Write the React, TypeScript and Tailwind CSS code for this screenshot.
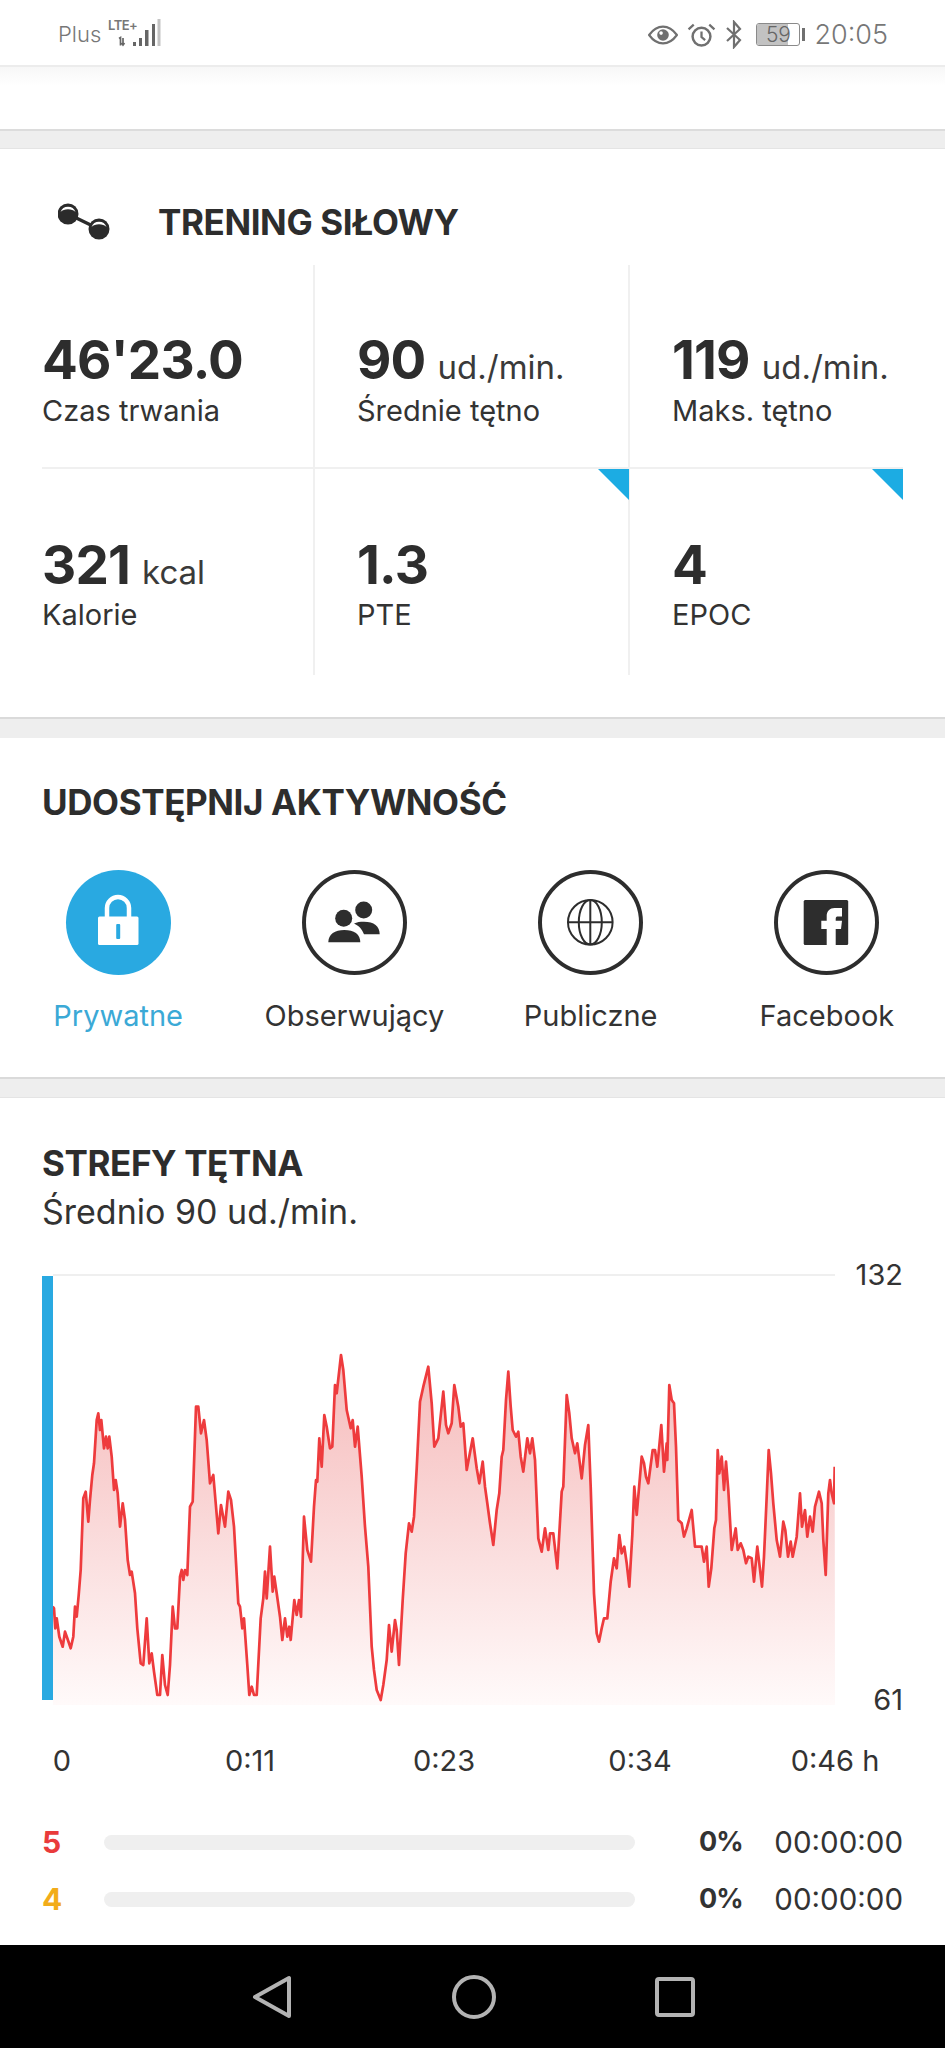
import React from "react";

// traced from the reference, crop coords (3x): left crop origin 30,1260 and right crop origin 470,1260
const leftTrace = [
  [68,1040],[72,1045],[76,1105],[80,1075],[88,1130],[98,1160],[105,1115],[112,1135],[122,1165],[130,1130],[135,1040],[140,1070],[146,1005],[152,930],[160,715],[167,695],[175,785],[180,720],[187,645],[192,610],[200,480],[205,460],[210,510],[214,480],[222,565],[228,530],[233,565],[238,530],[245,590],[252,690],[257,660],[263,700],[270,800],[278,730],[285,780],[293,900],[300,945],[305,935],[315,1000],[322,1105],[332,1210],[340,1215],[350,1075],[358,1210],[365,1180],[372,1235],[382,1305],[390,1305],[397,1185],[405,1275],[413,1305],[420,1215],[428,1040],[435,1105],[442,1105],[450,950],[455,930],[460,960],[465,930],[472,945],[480,740],[488,725],[498,440],[505,440],[513,520],[522,480],[530,540],[540,670],[550,645],[565,820],[573,735],[585,800],[595,695],[603,720],[612,800],[625,1030],[630,1040],[637,1105],[642,1075],[652,1215],[658,1305],[665,1280],[672,1305],[680,1305],[692,1075],[700,1015],[705,935],[710,1015],[720,860],[728,995],[733,950],[740,1000],[750,1070],[757,1140],[765,1075],[772,1130],[778,1100],[782,1140],[793,1020],[800,1065],[807,1020],[813,1070],[822,770],[832,870],[843,905],[852,740],[858,660],[862,665],[868,535],[875,620],[883,465],[890,500],[900,565],[907,560],[915,375],[920,400],[933,285],[940,330],[950,450],[962,505],[968,480],[975,560],[983,500],[995,650],[1005,800],[1015,920],[1025,1160],[1032,1230],[1040,1290],[1052,1320],[1060,1275],[1070,1200],[1077,1095],[1085,1175],[1095,1080],[1100,1110],[1107,1215],[1118,1020],[1127,880],[1137,790],[1145,815],[1152,770],[1160,625],[1170,425],[1180,380],[1195,320],[1205,430],[1213,560],[1225,535],[1240,395],[1248,495],[1255,520],[1265,490],[1273,375],[1285,440],[1292,500],[1300,490],[1310,630],
];
const rightTrace = [
  [8,535],[20,625],[28,670],[38,605],[45,680],[52,730],[60,790],[70,855],[80,750],[88,700],[95,590],[100,570],[108,420],[115,335],[122,440],[128,510],[138,530],[145,515],[152,590],[160,635],[172,535],[180,580],[187,535],[195,600],[205,835],[215,875],[225,805],[235,870],[240,820],[250,820],[262,925],[275,695],[280,680],[290,405],[298,460],[305,535],[315,580],[322,550],[335,655],[345,555],[355,495],[362,680],[372,1000],[380,1120],[387,1145],[395,1105],[402,1075],[412,1075],[422,965],[432,895],[440,925],[448,825],[455,880],[463,860],[470,910],[478,980],[487,825],[493,680],[500,765],[515,590],[522,610],[528,650],[535,670],[548,570],[555,570],[562,620],[574,495],[582,635],[590,550],[592,600],[598,375],[605,420],[612,430],[618,560],[625,780],[635,790],[642,830],[650,805],[665,750],[675,860],[695,860],[702,905],[710,860],[716,980],[724,925],[733,805],[738,780],[743,570],[748,640],[755,590],[762,690],[768,605],[775,690],[785,870],[797,805],[803,870],[812,850],[820,870],[828,910],[835,890],[845,895],[852,965],[862,860],[868,910],[876,980],[882,890],[890,710],[896,570],[903,640],[910,730],[920,840],[930,890],[940,785],[946,810],[954,890],[962,845],[968,890],[980,830],[990,700],[996,800],[1005,750],[1012,830],[1020,770],[1028,815],[1035,740],[1047,695],[1055,730],[1060,840],[1067,945],[1075,700],[1080,660],[1085,700],[1092,730],[1094,620],
];

const points = [
  ...leftTrace.map(([x, y]) => [30 + x / 3, 1260 + y / 3]),
  ...rightTrace.map(([x, y]) => [470 + x / 3, 1260 + y / 3]),
];
const line = points.map(([x, y]) => `${x.toFixed(1)},${y.toFixed(1)}`).join(" ");
const area = `53,1705 ${line} 835,1705`;

const Dumbbell = () => (
  <svg viewBox="13 12 52 38" className="w-[52px] h-[38px]">
    <path d="M23 23L54 38" stroke="#2b2b2b" strokeWidth="3.5" />
    <circle cx="23" cy="23" r="10.5" fill="#2b2b2b" />
    <circle cx="54" cy="38" r="10.5" fill="#2b2b2b" />
    <path d="M15.5 21A8 8 0 0 1 30.5 21A9 6 0 0 0 15.5 21Z" fill="#fff" />
    <path d="M46.5 36A8 8 0 0 1 61.5 36A9 6 0 0 0 46.5 36Z" fill="#fff" />
  </svg>
);

const StatusLeft = () => (
  <div className="flex items-start pl-[58px] pt-[19px] text-[#777]">
    <span className="text-[22px] font-light leading-none mt-[4px] w-[50px]">Plus</span>
    <div className="relative w-[55px] h-[28px]">
      <span className="block text-[13px] font-semibold leading-none tracking-[-0.5px]">LTE+</span>
      <svg viewBox="108 19 54 28" className="absolute top-0 left-0 w-[54px] h-[28px]">
        <path d="M119 38.5l1.5-1v8M123 38v7m-1.5-2l1.5 2 1.5-2" stroke="#666" strokeWidth="1.7" fill="none" />
        <rect x="133" y="42" width="3" height="4" fill="#666" />
        <rect x="139" y="38" width="3" height="8" fill="#666" />
        <rect x="145" y="30" width="3.5" height="16" fill="#666" />
        <rect x="152" y="24" width="3" height="22" fill="#666" />
        <rect x="157.5" y="19" width="3" height="27" fill="#c4c4c4" />
      </svg>
    </div>
  </div>
);

const StatusRight = () => (
  <div className="flex items-center pt-[19px] pr-[57px] text-[#777] h-[50px]">
    <svg viewBox="0 0 28 18" className="w-[30px] h-[20px] mr-[9px]">
      <path d="M1 9C5 3.5 9.5 1.2 14 1.2S23 3.5 27 9C23 14.5 18.5 16.8 14 16.8S5 14.5 1 9Z" fill="none" stroke="#707070" strokeWidth="2" />
      <circle cx="14" cy="9" r="5.4" fill="#707070" />
      <circle cx="12.2" cy="7.2" r="1.7" fill="#fff" />
    </svg>
    <svg viewBox="0 0 28 23" className="w-[29px] h-[24px] mr-[9px]">
      <circle cx="14" cy="13" r="8.6" fill="none" stroke="#707070" strokeWidth="2.4" />
      <path d="M14 8v5.5l3.5 3" fill="none" stroke="#707070" strokeWidth="2.2" />
      <path d="M1.5 6L6.5 1.5M26.5 6L21.5 1.5" stroke="#707070" strokeWidth="2.2" />
    </svg>
    <svg viewBox="0 0 18 29" className="w-[18px] h-[29px] mr-[13px]">
      <path d="M2 8L15 20L9 27V2L15 9L2 21" fill="none" stroke="#707070" strokeWidth="2.2" />
    </svg>
    <div className="relative w-[44px] h-[23px] border border-[#8a8a8a] rounded-[3px] overflow-hidden">
      <div className="h-full w-[31px] bg-[#c2c2c2]" />
      <span className="absolute inset-0 text-center text-[21px] leading-[22px] font-light text-[#666]">59</span>
    </div>
    <div className="w-[3px] h-[13px] bg-[#707070] ml-[2px] mr-[9px]" />
    <span className="text-[27px] font-light leading-none">20:05</span>
  </div>
);

type StatProps = {
  value: string;
  unit?: string;
  label: string;
  flag?: boolean;
  first?: boolean;
  last?: boolean;
  bottom?: boolean;
};

const Stat = ({ value, unit, label, flag, first, last, bottom }: StatProps) => (
  <div
    className={`relative flex flex-col ${first ? "" : "pl-[42px]"} ${last ? "" : "border-r-2 border-[#f0f0f0]"} ${
      bottom ? "pt-[66px]" : "pt-[65px] border-b-2 border-b-[#f0f0f0]"
    }`}
  >
    <div className="flex items-baseline h-[60px] leading-[60px] whitespace-nowrap">
      <span className="text-[53px] font-bold tracking-[-0.8px] text-[#2d2d2d]">{value}</span>
      {unit && <span className="ml-[12px] text-[33px] text-[#3a3a3a]">{unit}</span>}
    </div>
    <div className={`text-[29px] leading-[36px] text-[#333] whitespace-nowrap ${bottom ? "mt-[2px]" : "mt-[3px]"}`}>
      {label}
    </div>
    {flag && (
      <div
        className={`absolute top-0 w-[31px] h-[31px] bg-[#1cace3] [clip-path:polygon(0_0,100%_0,100%_100%)] ${
          last ? "right-0" : "-right-[1px]"
        }`}
      />
    )}
  </div>
);

const ShareItem = ({ label, active, children }: { label: string; active?: boolean; children: React.ReactNode }) => (
  <div className="flex flex-col items-center">
    <div className={`w-[105px] h-[105px] rounded-full ${active ? "bg-[#29a9e1]" : "border-[4px] border-[#2d2d2d]"} relative`}>
      <svg viewBox="0 0 105 105" className={`absolute w-[105px] h-[105px] ${active ? "top-0 left-0" : "-top-[4px] -left-[4px]"}`}>
        {children}
      </svg>
    </div>
    <span className={`mt-[23px] text-[29px] leading-[36px] whitespace-nowrap ${active ? "text-[#3ba9d6]" : "text-[#333]"}`}>
      {label}
    </span>
  </div>
);

const Zone = ({ n, color }: { n: string; color: string }) => (
  <div className="flex items-center h-[36px]">
    <span className={`w-[62px] text-[30px] font-bold leading-none ${color}`}>{n}</span>
    <div className="w-[531px] h-[15px] rounded-full bg-[#efefef]" />
    <span className="ml-[64px] text-[27px] font-bold tracking-[-1px] text-[#333]">0%</span>
    <span className="flex-1 text-right text-[29.5px] text-[#333]">00:00:00</span>
  </div>
);

export default function App() {
  return (
    <div className="w-[945px] h-[2048px] overflow-hidden flex flex-col bg-white font-['Inter',sans-serif]">
      <div className="h-[67px] flex justify-between border-b-2 border-[#ececec]">
        <StatusLeft />
        <StatusRight />
      </div>
      <div className="h-[64px] bg-gradient-to-b from-[#f7f7f7] to-white to-[30%] border-b-2 border-[#dcdcdc]" />
      <div className="h-[18px] bg-[#eeeeee] border-b border-[#e4e4e4]" />

      {/* activity summary */}
      <section className="h-[568px] flex flex-col">
        <div className="h-[116px] pt-[30px] pl-[58px] flex items-center">
          <Dumbbell />
          <h1 className="ml-[48px] text-[35px] font-bold tracking-[-0.4px] text-[#2d2d2d] whitespace-nowrap">TRENING SIŁOWY</h1>
        </div>
        <div className="mx-[42px] grid grid-cols-[273px_315px_273px] grid-rows-[204px_206px]">
          <Stat first value="46'23.0" label="Czas trwania" />
          <Stat value="90" unit="ud./min." label="Średnie tętno" />
          <Stat last value="119" unit="ud./min." label="Maks. tętno" />
          <Stat first bottom value="321" unit="kcal" label="Kalorie" />
          <Stat bottom flag value="1.3" label="PTE" />
          <Stat last bottom flag value="4" label="EPOC" />
        </div>
      </section>
      <div className="h-[21px] bg-[#eeeeee] border-t-2 border-[#dadada]" />

      {/* share */}
      <section className="h-[339px] flex flex-col">
        <h2 className="pl-[42px] mt-[44px] h-[40px] leading-[40px] text-[35px] font-bold tracking-[-0.4px] text-[#2d2d2d] whitespace-nowrap">UDOSTĘPNIJ AKTYWNOŚĆ</h2>
        <div className="mt-[48px] grid grid-cols-4">
          <ShareItem label="Prywatne" active>
            <path d="M41 47V38a11 11 0 0 1 22 0V47" fill="none" stroke="#fff" strokeWidth="4.5" />
            <rect x="32" y="46.5" width="40.5" height="28.5" rx="1.5" fill="#fff" />
            <rect x="50.2" y="54" width="4" height="15" rx="1" fill="#29a9e1" />
          </ShareItem>
          <ShareItem label="Obserwujący">
            <circle cx="41.7" cy="48.3" r="8.5" fill="#2d2d2d" />
            <circle cx="61.7" cy="40" r="8.5" fill="#2d2d2d" />
            <path d="M26.3 72.3C26.3 64 33 60 42.3 60C52 60 58.3 64 58.3 72.3Z" fill="#2d2d2d" />
            <path d="M52 53.5C55 52 58 51.7 62 51.7C72 51.7 77.7 56 77.7 64.3H62C60 59 57 56 52 53.5Z" fill="#2d2d2d" />
          </ShareItem>
          <ShareItem label="Publiczne">
            <g fill="none" stroke="#2d2d2d" strokeWidth="2">
              <circle cx="52.3" cy="52.3" r="22.3" />
              <ellipse cx="52.3" cy="52.3" rx="11.5" ry="22.3" />
              <path d="M52.3 30V74.6M30 52.3H74.6" />
            </g>
          </ShareItem>
          <ShareItem label="Facebook">
            <rect x="29.7" y="30" width="44.5" height="45" rx="1.5" fill="#2d2d2d" />
            <path d="M52.7 75V59H47.3V50.7H52.7V46C52.7 41 56 38 60.5 38H68V46.5H64C62.5 46.5 61.7 47 61.7 49V50.7H68L67 59H61.7V75Z" fill="#fff" />
          </ShareItem>
        </div>
      </section>
      <div className="h-[21px] bg-[#eeeeee] border-t-2 border-[#dadada] border-b border-b-[#e4e4e4]" />

      {/* heart rate zones */}
      <section className="h-[847px] px-[42px] flex flex-col">
        <h2 className="mt-[45px] h-[40px] leading-[40px] text-[35px] font-bold tracking-[-0.4px] text-[#2d2d2d]">STREFY TĘTNA</h2>
        <p className="mt-[9px] h-[40px] leading-[40px] text-[34px] text-[#333]">Średnio 90 ud./min.</p>
        <div className="mt-[25px] flex h-[461px]">
          <svg viewBox="42 1265 793 440" className="mt-[8px] w-[793px] h-[440px] shrink-0">
            <defs>
              <linearGradient id="hr-fill" gradientUnits="userSpaceOnUse" x1="0" y1="1345" x2="0" y2="1705">
                <stop offset="0" stopColor="#f5b8b8" />
                <stop offset="1" stopColor="#fffafa" />
              </linearGradient>
            </defs>
            <rect x="53" y="1274" width="782" height="2" fill="#efefef" />
            <polygon points={area} fill="url(#hr-fill)" />
            <polyline points={line} fill="none" stroke="#ee3b3d" strokeWidth="2.7" strokeLinejoin="round" />
            <rect x="42" y="1276" width="11" height="424" fill="#29a9e1" />
          </svg>
          <div className="flex-1 flex flex-col justify-between items-end text-[29px] leading-[36px] text-[#333]">
            <span>132</span>
            <span>61</span>
          </div>
        </div>
        <div className="mt-[25px] grid grid-cols-[40px_336px_52px_340px_50px] text-[29px] leading-[36px] text-[#333] whitespace-nowrap">
          <span className="flex justify-center">0</span>
          <span className="flex justify-center">0:11</span>
          <span className="flex justify-center">0:23</span>
          <span className="flex justify-center">0:34</span>
          <span className="flex justify-center">0:46 h</span>
        </div>
        <div className="mt-[45px] flex flex-col gap-[21px]">
          <Zone n="5" color="text-[#e93b3b]" />
          <Zone n="4" color="text-[#f2ac1a]" />
        </div>
      </section>

      <nav className="flex-1 bg-black flex items-center justify-center gap-[159px]">
        <svg viewBox="0 0 42 46" className="w-[42px] h-[46px]">
          <path d="M38 4V42L4 23Z" fill="none" stroke="#b3b3b3" strokeWidth="4" strokeLinejoin="round" />
        </svg>
        <svg viewBox="0 0 44 44" className="w-[44px] h-[44px]">
          <circle cx="22" cy="22" r="20" fill="none" stroke="#b3b3b3" strokeWidth="4" />
        </svg>
        <svg viewBox="0 0 40 40" className="w-[40px] h-[40px]">
          <rect x="2" y="2" width="36" height="36" rx="2" fill="none" stroke="#b3b3b3" strokeWidth="4" />
        </svg>
      </nav>
    </div>
  );
}
